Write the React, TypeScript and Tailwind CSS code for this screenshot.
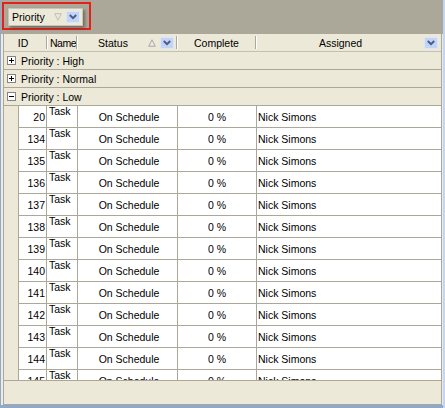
import React from "react";

function DropBtn() {
  return (
    <svg width="14" height="12" viewBox="0 0 14 12" className="block shrink-0">
      <rect x="0.5" y="0.5" width="13" height="11" fill="#c3d4f7" stroke="#dce6fa" />
      <polyline points="3.8,4 7,7.2 10.2,4" fill="none" stroke="#4a5d86" strokeWidth="2" />
    </svg>
  );
}

function TriUp() {
  return (
    <svg width="8" height="8" viewBox="0 0 8 8" className="block shrink-0">
      <path d="M4 0.8 L7.3 7.3 H0.7 Z" fill="none" stroke="#a8a8a8" strokeWidth="1" />
    </svg>
  );
}

function TriDown() {
  return (
    <svg width="8" height="8" viewBox="0 0 8 8" className="block shrink-0">
      <path d="M0.7 0.7 H7.3 L4 7.2 Z" fill="none" stroke="#bdbdbd" strokeWidth="1" />
    </svg>
  );
}

function Expander({ open }: { open: boolean }) {
  return (
    <svg width="9" height="9" viewBox="0 0 9 9" className="block shrink-0">
      <rect x="0.5" y="0.5" width="8" height="8" fill="#ffffff" stroke="#848484" />
      <line x1="2" y1="4.5" x2="7" y2="4.5" stroke="#000" strokeWidth="1" />
      {!open && <line x1="4.5" y1="2" x2="4.5" y2="7" stroke="#000" strokeWidth="1" />}
    </svg>
  );
}

function Sep() {
  return <div className="w-[2px] h-[13px] border-l border-l-[#aca899] border-r border-r-white shrink-0" />;
}

function GroupRow({ label, open }: { label: string; open: boolean }) {
  return (
    <div className="h-[18px] shrink-0 bg-[#ece9d8] border-b border-[#aca899] flex items-center pl-[3px] gap-[5px]">
      <Expander open={open} />
      <span className="leading-[12px]">{label}</span>
    </div>
  );
}

const ids = [20, 134, 135, 136, 137, 138, 139, 140, 141, 142, 143, 144, 145];

export default function App() {
  return (
    <div className="w-[445px] h-[408px] flex overflow-hidden bg-[#ece9d8] text-black text-[10.5px] font-['Liberation_Sans',Arial,sans-serif]">
      <div className="w-px h-full bg-[#8fa8cd] shrink-0" />
      <div className="w-[442px] h-full flex flex-col shrink-0">
        <div className="h-[34px] shrink-0 bg-[#aca899] pl-[1px] pt-[2px]">
          <div className="w-[89px] h-[28px] border-2 border-[#e4211c] pl-[4px] pt-[4px]">
            <div className="w-[75px] h-[18px] bg-[#ece9d8] border border-[#c9c5b5] shadow-[2px_2px_3px_rgba(60,58,50,0.55)] flex items-center pl-[3px]">
              <span className="leading-[12px] w-[42px]">Priority</span>
              <TriDown />
              <div className="w-[4px]" />
              <DropBtn />
            </div>
          </div>
        </div>
        <div className="flex-1 flex min-h-0">
          <div className="w-[2px] bg-[#eeece2] shrink-0" />
          <div className="w-[439px] shrink-0 flex flex-col border-l border-r border-b border-[#aca899] min-h-0">
            <div className="h-[18px] shrink-0 bg-[#ece9d8] border-b border-[#c4c0b0] flex items-center">
              <div className="w-[42px] pr-[4px] text-center leading-[12px] shrink-0">ID</div>
              <Sep />
              <div className="w-[28px] pl-[2px] leading-[12px] shrink-0 whitespace-nowrap tracking-[-0.5px]">Name</div>
              <Sep />
              <div className="w-[98px] flex items-center shrink-0 pr-[2px]">
                <div className="w-[70px] text-center leading-[12px]">Status</div>
                <TriUp />
                <div className="w-[4px]" />
                <DropBtn />
              </div>
              <Sep />
              <div className="w-[77px] text-center leading-[12px] shrink-0">Complete</div>
              <Sep />
              <div className="flex-1 flex items-center pr-[3px]">
                <div className="flex-1 text-center leading-[12px]">Assigned</div>
                <DropBtn />
              </div>
            </div>
            <GroupRow label="Priority : High" open={false} />
            <GroupRow label="Priority : Normal" open={false} />
            <GroupRow label="Priority : Low" open={true} />
            <div className="flex-1 min-h-0 overflow-hidden flex flex-col">
              {ids.map((id) => (
                <div key={id} className="h-[22px] shrink-0 flex">
                  <div className="w-[14px] shrink-0 bg-[#ece9d8]" />
                  <div className="flex-1 flex bg-white border-l border-b border-[#aca899]">
                    <div className="w-[28px] shrink-0 border-r border-[#aca899] flex items-center justify-end pr-[1px] pt-[1px] leading-[12px]">
                      {id}
                    </div>
                    <div className="w-[31px] shrink-0 border-r border-[#aca899] pl-[2px] leading-[11px] whitespace-nowrap">
                      Task
                    </div>
                    <div className="w-[100px] shrink-0 border-r border-[#aca899] flex items-center justify-center pl-[3px] pt-[1px] leading-[12px]">
                      On Schedule
                    </div>
                    <div className="w-[79px] shrink-0 border-r border-[#aca899] flex items-center justify-center pt-[1px] leading-[12px]">
                      0 %
                    </div>
                    <div className="flex-1 flex items-center pl-[1px] pt-[1px] leading-[12px] whitespace-nowrap">
                      Nick Simons
                    </div>
                  </div>
                </div>
              ))}
            </div>
            <div className="h-[24px] shrink-0 bg-[#ece9d8] border-t border-[#aca899]" />
          </div>
          <div className="w-px bg-[#eeece2] shrink-0" />
        </div>
        <div className="h-[3px] shrink-0 bg-[#8fa8cd]" />
      </div>
      <div className="w-[2px] h-full bg-[#c3d5f3] shrink-0" />
    </div>
  );
}
